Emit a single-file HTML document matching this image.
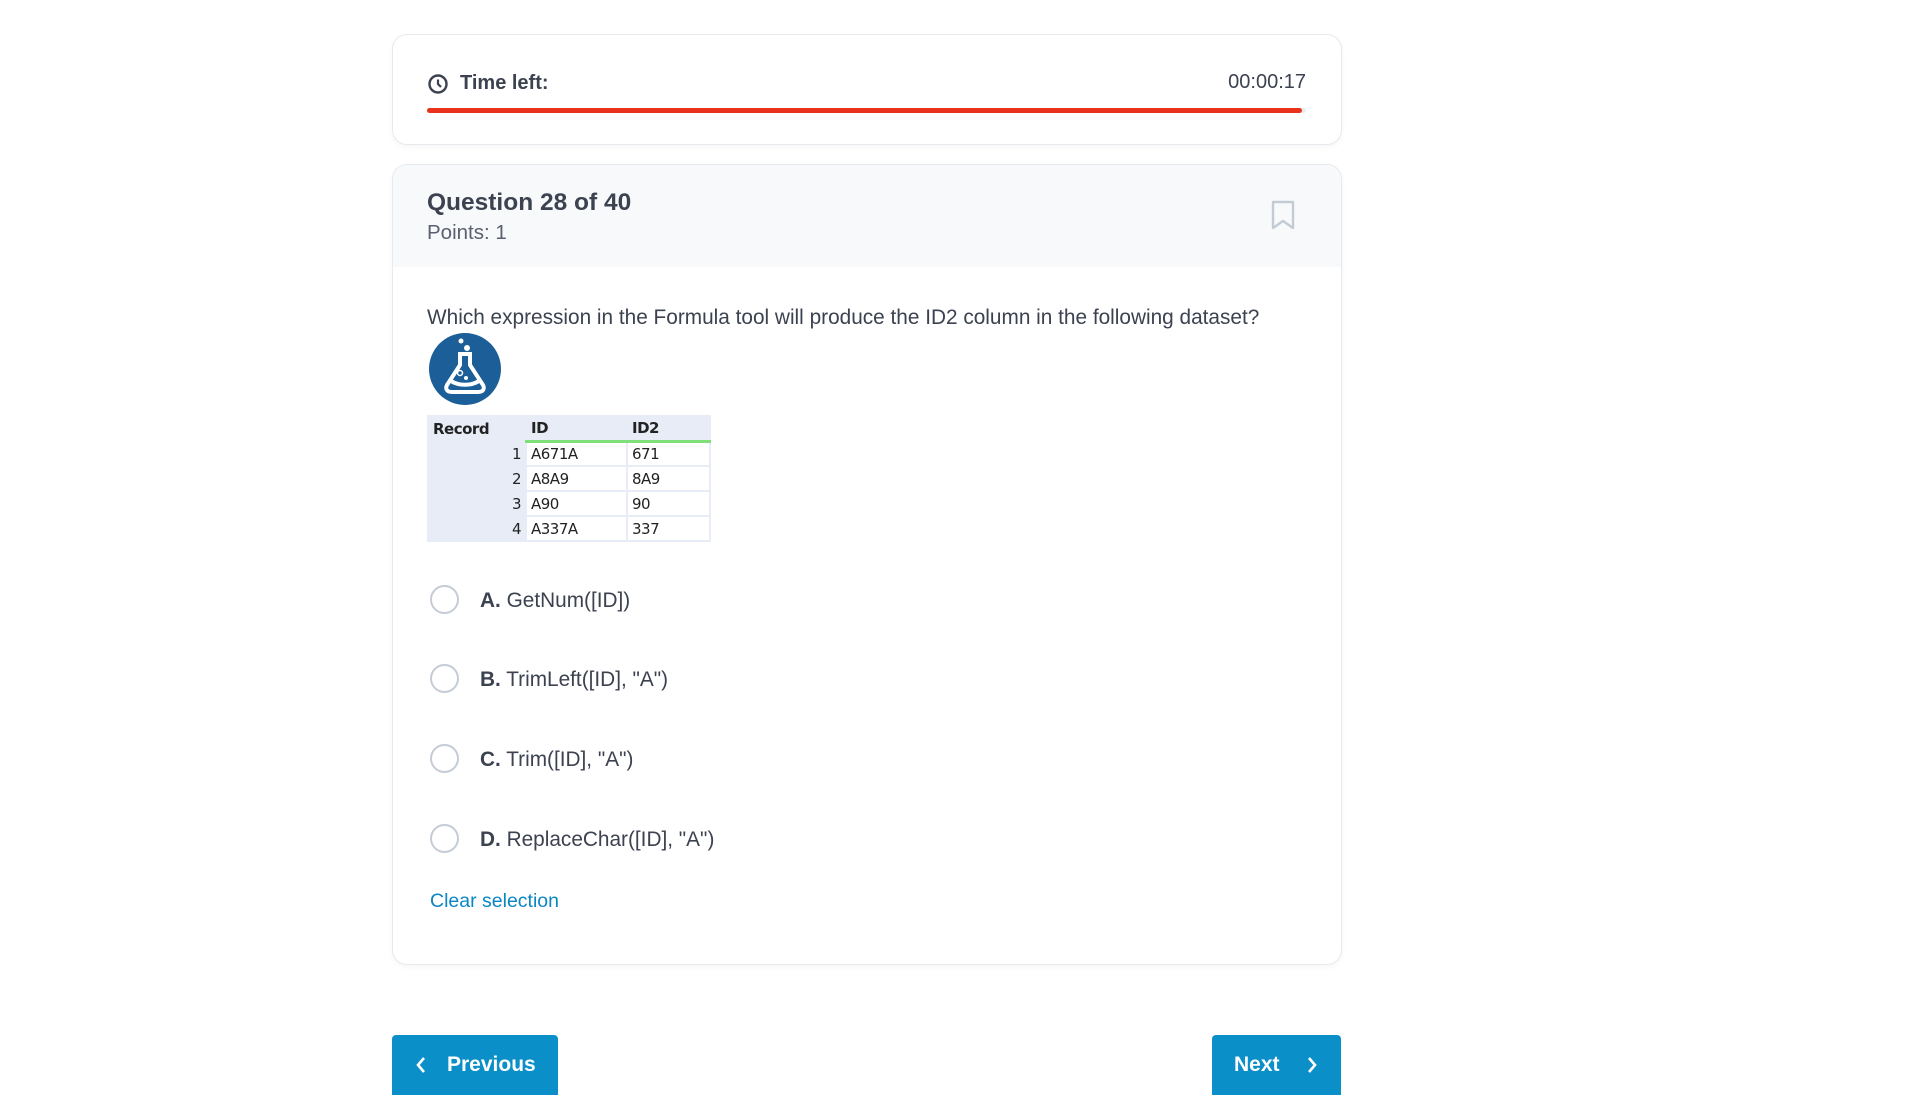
<!DOCTYPE html>
<html><head><meta charset="utf-8"><style>
*{box-sizing:border-box;margin:0;padding:0}
body{width:1920px;height:1080px;background:#fff;font-family:"Liberation Sans",Arial,sans-serif;position:relative;overflow:hidden;color:#3c4250}
.card{position:absolute;left:392px;width:950px;border:1px solid #e6e9ee;border-radius:15px;background:#fff;box-shadow:0 2px 6px rgba(0,0,0,0.04)}
.abs{position:absolute}
.radio{position:absolute;left:430px;width:29px;height:29px;border:2px solid #c5ccd5;border-radius:50%}
.opt{position:absolute;left:480px;font-size:20.8px;color:#3c4250}
table{position:absolute;left:427px;top:415px;border-collapse:collapse;font-size:15px;color:#222;background:#e7ecf6;font-family:"DejaVu Sans",sans-serif;letter-spacing:-0.5px}
td{height:25px;padding:0 4px;border:2px solid #e7ecf6}
.btn{position:absolute;top:1035px;height:60px;background:#0b8fc9;color:#fff;font-weight:bold;font-size:21px;border-radius:4px 4px 0 0;display:flex;align-items:center}
</style></head><body>
<div class="card" style="top:34px;height:111px"></div>
<svg class="abs" style="left:427px;top:73px" width="22" height="22" viewBox="0 0 22 22"><circle cx="11" cy="11" r="8.5" fill="none" stroke="#3c4250" stroke-width="2.4"/><path d="M11 6.5V11l3 3" fill="none" stroke="#3c4250" stroke-width="2.2"/></svg>
<div class="abs" style="left:460px;top:72px;font-size:20px;font-weight:bold">Time left:</div>
<div class="abs" style="left:1200px;width:106px;text-align:right;top:71px;font-size:20px">00:00:17</div>
<div class="abs" style="left:427px;top:108px;width:879px;height:5px;background:#e8ebef;border-radius:3px"></div>
<div class="abs" style="left:427px;top:108px;width:875px;height:5px;background:#e8321b;border-radius:3px"></div>

<div class="card" style="top:164px;height:801px;overflow:hidden"><div style="height:102px;background:#f8f9fb"></div></div>
<div class="abs" style="left:427px;top:189px;font-size:24.5px;font-weight:bold">Question 28 of 40</div>
<div class="abs" style="left:427px;top:221px;font-size:20.5px;color:#5a6070">Points: 1</div>
<svg class="abs" style="left:1270px;top:200px" width="26" height="30" viewBox="0 0 26 30"><path d="M3 2h20v26l-10-7-10 7z" fill="none" stroke="#c3cbd4" stroke-width="2.4" stroke-linejoin="round"/></svg>
<div class="abs" style="left:427px;top:306px;font-size:20.8px">Which expression in the Formula tool will produce the ID2 column in the following dataset?</div>
<svg class="abs" style="left:429px;top:333px" width="72" height="72" viewBox="0 0 72 72"><circle cx="36" cy="36" r="36" fill="#1b5e98"/><circle cx="32" cy="8" r="2.5" fill="#fff"/><circle cx="38" cy="15" r="3" fill="#fff"/><path d="M29 21h14M31 21v11L18 52c-2 4 0 7 5 7h26c5 0 7-3 5-7L41 32V21" fill="none" stroke="#fff" stroke-width="4" stroke-linejoin="round"/><path d="M22 48c8 5 20 5 28 0" fill="none" stroke="#fff" stroke-width="4"/><circle cx="31" cy="40" r="2.5" fill="none" stroke="#fff" stroke-width="1.5"/><circle cx="37" cy="45" r="2" fill="#fff"/></svg>
<table>
<tr style="font-weight:bold"><td style="width:98px">Record</td><td style="width:101px;border-bottom:3px solid #7fe07a">ID</td><td style="width:83px;border-bottom:3px solid #7fe07a">ID2</td></tr>
<tr><td style="text-align:right">1</td><td style="background:#fff">A671A</td><td style="background:#fff">671</td></tr>
<tr><td style="text-align:right">2</td><td style="background:#fff">A8A9</td><td style="background:#fff">8A9</td></tr>
<tr><td style="text-align:right">3</td><td style="background:#fff">A90</td><td style="background:#fff">90</td></tr>
<tr><td style="text-align:right">4</td><td style="background:#fff">A337A</td><td style="background:#fff">337</td></tr>
</table>
<div class="radio" style="top:585px"></div><div class="opt" style="top:589px"><b>A.</b> GetNum([ID])</div>
<div class="radio" style="top:664px"></div><div class="opt" style="top:668px"><b>B.</b> TrimLeft([ID], "A")</div>
<div class="radio" style="top:744px"></div><div class="opt" style="top:748px"><b>C.</b> Trim([ID], "A")</div>
<div class="radio" style="top:824px"></div><div class="opt" style="top:828px"><b>D.</b> ReplaceChar([ID], "A")</div>
<div class="abs" style="left:430px;top:890px;font-size:19.5px;color:#0a86c4">Clear selection</div>

<div class="btn" style="left:392px;width:166px;padding-left:23px"><svg width="12" height="18" viewBox="0 0 12 18" style="margin-right:20px"><path d="M9 2L3 9l6 7" fill="none" stroke="#fff" stroke-width="2.6"/></svg>Previous</div>
<div class="btn" style="left:1212px;width:129px;padding-left:22px">Next<svg width="12" height="18" viewBox="0 0 12 18" style="margin-left:26px"><path d="M3 2l6 7-6 7" fill="none" stroke="#fff" stroke-width="2.6"/></svg></div>
</body></html>
